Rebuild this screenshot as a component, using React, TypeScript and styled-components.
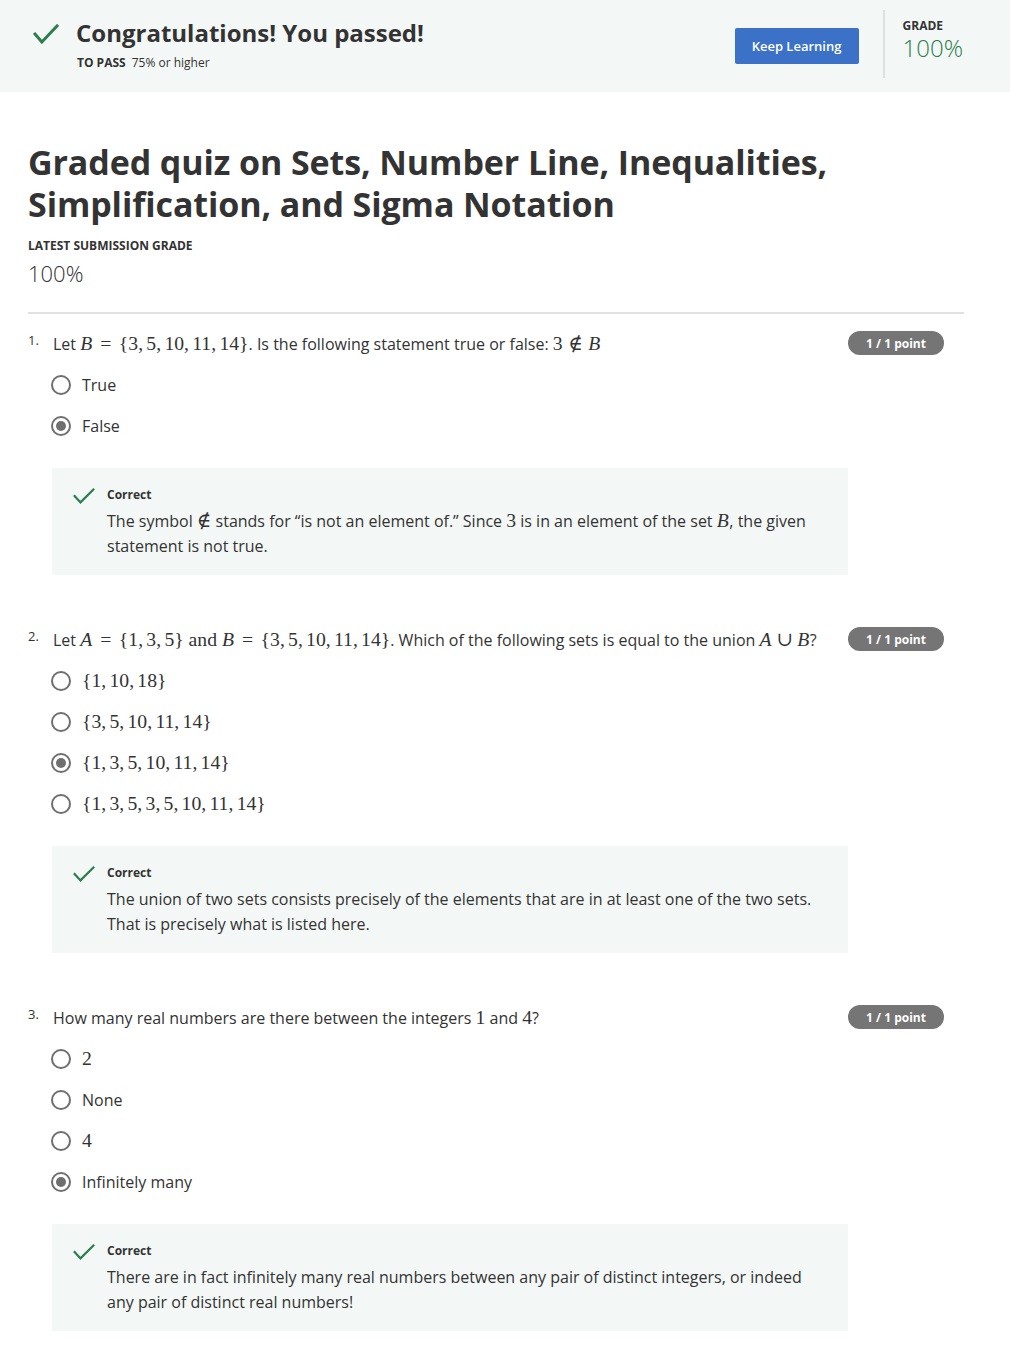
import React from "react";
import styled, { createGlobalStyle } from "styled-components";

const Global = createGlobalStyle`
  html, body { margin: 0; padding: 0; background: #fff; }
  body { font-family: "Open Sans", "Noto Sans", Arial, sans-serif; color: #333; }
  * { box-sizing: border-box; }
`;

const GREEN = "#2e7d4f";
const TINT = "#f3f8f6";

const Header = styled.header`
  height: 92px;
  background: ${TINT};
  display: flex;
  align-items: flex-start;
  padding-left: 33px;
`;

const HeaderLeft = styled.div`
  flex: 1;
  display: flex;
  align-items: flex-start;
  padding-top: 24px;
`;

const HeaderCheck = styled.svg`
  width: 26px;
  height: 20px;
  flex: none;
  margin-right: 17px;
`;

const HeaderTexts = styled.div`
  display: flex;
  flex-direction: column;
  margin-top: -6px;
`;

const PassTitle = styled.h1`
  margin: 0;
  font-size: 24px;
  line-height: 30px;
  font-weight: 700;
  color: #333;
`;

const PassInfo = styled.div`
  margin-top: 7px;
  font-size: 12px;
  line-height: 16px;
  color: #333;
  display: flex;
  gap: 6px;
  padding-left: 1px;
`;

const PassLabel = styled.span`
  font-weight: 700;
`;

const KeepButton = styled.button`
  margin-top: 28px;
  width: 124px;
  height: 36px;
  border: none;
  border-radius: 2px;
  background: #3b72c8;
  color: #fff;
  font-family: inherit;
  font-size: 13px;
  font-weight: 600;
  padding: 0;
`;

const VDivider = styled.div`
  width: 2px;
  height: 68px;
  margin-top: 10px;
  margin-left: 24px;
  background: #dde1df;
`;

const GradeBlock = styled.div`
  padding: 18px 47px 0 18px;
  display: flex;
  flex-direction: column;
`;

const GradeLabel = styled.div`
  font-size: 12px;
  line-height: 16px;
  font-weight: 700;
  color: #333;
`;

const GradeValue = styled.div`
  font-size: 24px;
  line-height: 28px;
  font-weight: 300;
  color: ${GREEN};
`;

const Main = styled.main`
  padding: 49px 46px 40px 28px;
`;

const QuizTitle = styled.h2`
  margin: 0;
  font-size: 34px;
  line-height: 42px;
  font-weight: 700;
  color: #333;
  max-width: 820px;
  letter-spacing: -0.1px;
`;

const SubLabel = styled.div`
  margin-top: 13px;
  font-size: 12px;
  line-height: 16px;
  font-weight: 700;
  color: #333;
`;

const SubValue = styled.div`
  margin-top: 5px;
  font-size: 22px;
  line-height: 28px;
  font-weight: 300;
  color: #333;
`;

const Separator = styled.hr`
  margin: 25px 0 0 0;
  border: none;
  height: 2px;
  background: #e1e1e1;
`;

const QuestionBlock = styled.section<{ $first?: boolean }>`
  margin-top: ${(p) => (p.$first ? "18px" : "53px")};
`;

const QuestionRow = styled.div`
  display: flex;
  align-items: flex-start;
  padding-right: 20px;
`;

const QNum = styled.span`
  width: 25px;
  flex: none;
  font-size: 13px;
  line-height: 16px;
  color: #333;
`;

const QText = styled.div`
  flex: 1;
  font-size: 16px;
  line-height: 24px;
  color: #333;
`;

const Badge = styled.span`
  flex: none;
  width: 96px;
  height: 24px;
  margin-left: 20px;
  margin-top: -1px;
  border-radius: 12px;
  background: #757575;
  color: #fff;
  font-size: 12px;
  font-weight: 700;
  display: flex;
  align-items: center;
  justify-content: center;
`;

const Options = styled.div`
  margin-top: 8px;
  padding-left: 23px;
  display: flex;
  flex-direction: column;
`;

const OptionRow = styled.label`
  height: 41px;
  display: flex;
  align-items: center;
  gap: 11px;
  font-size: 16px;
  color: #333;
`;

const Radio = styled.span<{ $checked?: boolean }>`
  width: 20px;
  height: 20px;
  flex: none;
  border-radius: 50%;
  border: 2px solid #6f6f6f;
  display: flex;
  align-items: center;
  justify-content: center;
  &::after {
    content: "";
    width: 10px;
    height: 10px;
    border-radius: 50%;
    background: #6f6f6f;
    display: ${(p) => (p.$checked ? "block" : "none")};
  }
`;

const Feedback = styled.div`
  margin: 22px 0 0 24px;
  width: 796px;
  background: ${TINT};
  padding: 19px 20px 16px 21px;
  display: flex;
  gap: 12px;
`;

const FbCheck = styled.svg`
  width: 22px;
  height: 16px;
  flex: none;
  margin-top: 1px;
`;

const FbBody = styled.div`
  display: flex;
  flex-direction: column;
`;

const FbLabel = styled.div`
  font-size: 12px;
  line-height: 16px;
  font-weight: 700;
  color: #333;
`;

const FbText = styled.p`
  margin: 6px 0 0 0;
  font-size: 16px;
  line-height: 25px;
  color: #333;
`;

const MathWrap = styled.span`
  font-family: "Liberation Serif", "DejaVu Serif", serif;
  font-size: 1.23em;
  line-height: 1;
  white-space: nowrap;
`;

const MVar = styled.span`
  font-style: italic;
  margin-right: 0.03em;
`;

const MRel = styled.span<{ $space: string }>`
  margin: 0 ${(p) => p.$space};
  font-weight: 300;
`;

const MPunct = styled.span`
  margin-right: 0.1667em;
`;

const MText = styled.span``;

function M({ t }: { t: string }) {
  const parts: React.ReactNode[] = [];
  const alone = t.trim().length === 1;
  const tokens = t.split(/(\s*and\s*)/);
  tokens.forEach((tok, ti) => {
    if (/^\s*and\s*$/.test(tok)) {
      parts.push(<MText key={"t" + ti}>{"\u00a0and\u00a0"}</MText>);
      return;
    }
    Array.from(tok).forEach((ch, i) => {
      const k = ti + "-" + i;
      if (ch === " ") return;
      if (/[A-Za-z]/.test(ch)) parts.push(<MVar key={k}>{ch}</MVar>);
      else if (ch === "=") parts.push(<MRel key={k} $space={alone ? "0" : "0.38em"}>{ch}</MRel>);
      else if (ch === "∉") parts.push(<MRel key={k} $space={alone ? "0" : "0.28em"}>{ch}</MRel>);
      else if (ch === "∪") parts.push(<MRel key={k} $space={alone ? "0" : "0.22em"}>{ch}</MRel>);
      else if (ch === ",") parts.push(<MPunct key={k}>{ch}</MPunct>);
      else parts.push(<span key={k}>{ch}</span>);
    });
  });
  return <MathWrap>{parts}</MathWrap>;
}

const Check = ({ as: C, w, h, sw }: { as: typeof HeaderCheck; w: number; h: number; sw: number }) => (
  <C viewBox={`0 0 ${w} ${h}`}>
    <polyline
      points={`${sw / 2 + 0.5},${h * 0.5} ${w * 0.34},${h - sw / 2 - 0.5} ${w - sw / 2 - 0.5},${sw / 2 + 0.5}`}
      fill="none"
      stroke={GREEN}
      strokeWidth={sw}
      strokeLinecap="square"
      strokeLinejoin="miter"
    />
  </C>
);

type Opt = { label: React.ReactNode; checked?: boolean };

const Question = ({
  n,
  first,
  text,
  options,
  feedback,
}: {
  n: number;
  first?: boolean;
  text: React.ReactNode;
  options: Opt[];
  feedback: React.ReactNode;
}) => (
  <QuestionBlock $first={first}>
    <QuestionRow>
      <QNum>{n}.</QNum>
      <QText>{text}</QText>
      <Badge>1 / 1 point</Badge>
    </QuestionRow>
    <Options>
      {options.map((o, i) => (
        <OptionRow key={i}>
          <Radio $checked={o.checked} />
          <span>{o.label}</span>
        </OptionRow>
      ))}
    </Options>
    <Feedback>
      <Check as={FbCheck} w={22} h={16} sw={2.2} />
      <FbBody>
        <FbLabel>Correct</FbLabel>
        <FbText>{feedback}</FbText>
      </FbBody>
    </Feedback>
  </QuestionBlock>
);

export default function App() {
  return (
    <>
      <Global />
      <Header>
        <HeaderLeft>
          <Check as={HeaderCheck} w={26} h={20} sw={3} />
          <HeaderTexts>
            <PassTitle>Congratulations! You passed!</PassTitle>
            <PassInfo>
              <PassLabel>TO PASS</PassLabel>
              <span>75% or higher</span>
            </PassInfo>
          </HeaderTexts>
        </HeaderLeft>
        <KeepButton>Keep Learning</KeepButton>
        <VDivider />
        <GradeBlock>
          <GradeLabel>GRADE</GradeLabel>
          <GradeValue>100%</GradeValue>
        </GradeBlock>
      </Header>
      <Main>
        <QuizTitle>
          Graded quiz on Sets, Number Line, Inequalities, Simplification, and Sigma Notation
        </QuizTitle>
        <SubLabel>LATEST SUBMISSION GRADE</SubLabel>
        <SubValue>100%</SubValue>
        <Separator />

        <Question
          n={1}
          first
          text={
            <>
              Let <M t="B = {3,5,10,11,14}" />. Is the following statement true or false: <M t="3 ∉ B" />
            </>
          }
          options={[{ label: "True" }, { label: "False", checked: true }]}
          feedback={
            <>
              The symbol <M t="∉" /> stands for “is not an element of.” Since <M t="3" /> is in an element of the set{" "}
              <M t="B" />, the given statement is not true.
            </>
          }
        />

        <Question
          n={2}
          text={
            <>
              Let <M t="A = {1,3,5} and B = {3,5,10,11,14}" />. Which of the following sets is equal to the union{" "}
              <M t="A ∪ B" />?
            </>
          }
          options={[
            { label: <M t="{1,10,18}" /> },
            { label: <M t="{3,5,10,11,14}" /> },
            { label: <M t="{1,3,5,10,11,14}" />, checked: true },
            { label: <M t="{1,3,5,3,5,10,11,14}" /> },
          ]}
          feedback={
            <>
              The union of two sets consists precisely of the elements that are in at least one of the two sets. That is
              precisely what is listed here.
            </>
          }
        />

        <Question
          n={3}
          text={
            <>
              How many real numbers are there between the integers <M t="1" /> and <M t="4" />?
            </>
          }
          options={[
            { label: <M t="2" /> },
            { label: "None" },
            { label: <M t="4" /> },
            { label: "Infinitely many", checked: true },
          ]}
          feedback={
            <>
              There are in fact infinitely many real numbers between any pair of distinct integers, or indeed any pair of
              distinct real numbers!
            </>
          }
        />
      </Main>
    </>
  );
}
